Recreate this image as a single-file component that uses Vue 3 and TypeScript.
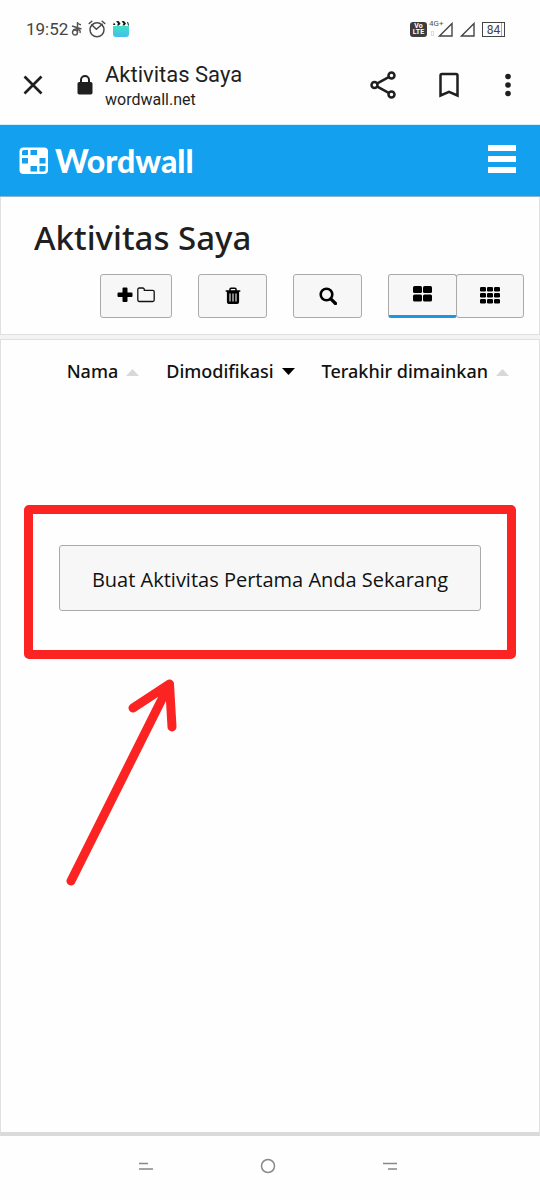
<script setup lang="ts">
import { ref } from 'vue'

type View = 'large' | 'small'
type Direction = 'up' | 'down'

interface Column {
  key: string
  label: string
  direction: Direction
}

const view = ref<View>('large')
const sortKey = ref('modified')

const columns: Column[] = [
  { key: 'name', label: 'Nama', direction: 'up' },
  { key: 'modified', label: 'Dimodifikasi', direction: 'down' },
  { key: 'played', label: 'Terakhir dimainkan', direction: 'up' },
]

const smallTiles = [0, 1, 2].flatMap((row) => [0, 1, 2].map((col) => ({ x: col * 7, y: row * 6 })))
</script>

<template>
  <div class="screen">
    <div class="status">
      <span class="clock">19:52</span>
      <svg class="note" width="12" height="16" viewBox="0 0 12 16" fill="none" stroke="#555" stroke-width="1.400">
        <circle cx="4" cy="11.500" r="2.500" />
        <path d="M6.500 11.500V1c.3 1.800 1.500 2.600 3.500 2.800M1 5l9.500 3M6.500 7.500 2 9M7 8.500c2 .5 2.600 1.800 2 3.500" />
      </svg>
      <svg class="alarm" width="18" height="18" viewBox="0 0 18 18" fill="none" stroke="#4a4a4a" stroke-width="1.500" stroke-linecap="round">
        <circle cx="9" cy="9.800" r="7" />
        <path d="M1.200 3.500 3.800 1.300M16.800 3.500 14.200 1.300M3.800 4.800 8.300 9.300 14.200 4.200" />
      </svg>
      <svg class="clapper" width="18" height="18" viewBox="0 0 18 18">
        <defs>
          <linearGradient id="clapper-fill" x1="0" y1="0" x2="0" y2="1">
            <stop offset="0" stop-color="#3fe0c5" />
            <stop offset="1" stop-color="#45bdf0" />
          </linearGradient>
        </defs>
        <path d="M1 6h16v8a3 3 0 0 1-3 3H4a3 3 0 0 1-3-3z" fill="url(#clapper-fill)" />
        <path d="M1 5 2 2.500l1.500 2.500zM4 1.200l2.500-.2 2 2.500L7 5.500H5l1-2zM9.500 1.200l2.500-.2 2 2.500-1.500 2h-2l1-2zM15 1.800l1.300.8.7 2.900h-1z" fill="#161616" />
      </svg>
      <span class="volte"><b>Vo</b><b>LTE</b></span>
      <span class="network"><span>4G+</span><i></i></span>
      <svg class="signal first" width="15" height="15" viewBox="0 0 15 15" fill="none" stroke="#444" stroke-width="1.400">
        <path d="M1.500 14H14V1.500z" />
      </svg>
      <svg class="signal second" width="15" height="15" viewBox="0 0 15 15" fill="none" stroke="#444" stroke-width="1.400">
        <path d="M1.500 14H14V1.500z" />
      </svg>
      <span class="battery">84</span>
    </div>

    <div class="browser">
      <button type="button" class="plain close" aria-label="Tutup">
        <svg width="20" height="20" viewBox="0 0 20 20" stroke="#1f1f1f" stroke-width="2.600"><path d="M1.500 1.500l17 17M18.500 1.500l-17 17" /></svg>
      </button>
      <svg class="lock" width="16" height="20" viewBox="0 0 16 20">
        <rect x="0.500" y="7" width="15" height="12.500" rx="1.800" fill="#1f1f1f" />
        <path d="M4 8V5a4 4 0 0 1 8 0v3" fill="none" stroke="#1f1f1f" stroke-width="2" />
      </svg>
      <div class="site">
        <span class="page-name">Aktivitas Saya</span>
        <span class="domain">wordwall.net</span>
      </div>
      <button type="button" class="plain" aria-label="Bagikan">
        <svg width="26" height="28" viewBox="0 0 26 28" fill="none" stroke="#1f1f1f" stroke-width="2.500">
          <circle cx="21.500" cy="4.500" r="3" /><circle cx="4.500" cy="14" r="3" /><circle cx="21.500" cy="23.500" r="3" />
          <path d="M7.300 12.400 18.700 6.100M7.300 15.600l11.400 6.300" />
        </svg>
      </button>
      <button type="button" class="plain bookmark" aria-label="Simpan">
        <svg width="20" height="26" viewBox="0 0 20 26" fill="none" stroke="#1f1f1f" stroke-width="2.500">
          <path d="M1.500 23.500V3.500a1.500 1.500 0 0 1 1.500-1.500h14a1.500 1.500 0 0 1 1.500 1.500v20L10 19.800z" />
        </svg>
      </button>
      <button type="button" class="plain more" aria-label="Lainnya">
        <svg width="6" height="24" viewBox="0 0 6 24" fill="#1f1f1f"><circle cx="3" cy="3.500" r="2.800" /><circle cx="3" cy="12" r="2.800" /><circle cx="3" cy="20.500" r="2.800" /></svg>
      </button>
    </div>

    <header class="brand-bar">
      <a href="#" class="brand">
        <svg width="30" height="28" viewBox="0 0 30 28">
          <rect x="0.500" y="0.500" width="28.500" height="26.500" rx="4" fill="#fff" />
          <g fill="#12a0ef">
            <path d="M5 3h4v5H3V5a2 2 0 0 1 2-2z" />
            <rect x="11.500" y="3" width="6.500" height="5" />
            <rect x="3" y="11" width="6" height="5.500" />
            <rect x="20.500" y="11" width="6" height="5.500" />
            <rect x="11.500" y="19" width="6.500" height="5.500" />
            <path d="M20.500 19h6v3.500a2 2 0 0 1-2 2h-4z" />
          </g>
        </svg>
        <span class="wordmark">Wordwall</span>
      </a>
      <button type="button" class="plain menu" aria-label="Menu"><i></i><i></i><i></i></button>
    </header>

    <section class="panel heading">
      <h1>Aktivitas Saya</h1>
      <div class="toolbar">
        <button type="button" class="tool wide" aria-label="Folder baru">
          <svg width="16" height="16" viewBox="0 0 16 16" fill="#000"><path d="M7 .5h2.500a1 1 0 0 1 1 1v4h4a1 1 0 0 1 1 1v2.500a1 1 0 0 1-1 1h-4v4a1 1 0 0 1-1 1H6.500a1 1 0 0 1-1-1v-4h-4a1 1 0 0 1-1-1V6.500a1 1 0 0 1 1-1h4v-4a1 1 0 0 1 1-1z" /></svg>
          <svg width="18" height="16" viewBox="0 0 18 16" fill="none" stroke="#111" stroke-width="1.300"><path d="M.8 13V2.500A1.500 1.500 0 0 1 2.300 1h3.500a1.500 1.500 0 0 1 1.500 1.500v.8h8.400a1.500 1.500 0 0 1 1.500 1.500V13a1.500 1.500 0 0 1-1.500 1.500H2.300A1.500 1.500 0 0 1 .8 13z" /></svg>
        </button>
        <button type="button" class="tool" aria-label="Sampah">
          <svg width="16" height="18" viewBox="0 0 16 18">
            <path d="M5 4V2.200A1 1 0 0 1 6 1.200h4a1 1 0 0 1 1 1V4" fill="none" stroke="#000" stroke-width="1.500" />
            <path d="M.7 3.300h14.600v1.400h-1.200V15a2 2 0 0 1-2 2H3.900a2 2 0 0 1-2-2V4.700H.7z" fill="#000" />
            <path d="M5 6.500v8M8 6.500v8M11 6.500v8" stroke="#ddd" stroke-width="1.200" />
          </svg>
        </button>
        <button type="button" class="tool" aria-label="Cari">
          <svg width="18" height="18" viewBox="0 0 18 18" fill="none" stroke="#000"><circle cx="7.500" cy="7.500" r="5.800" stroke-width="2.600" /><path d="M11.800 11.800l4.700 4.700" stroke-width="3.200" stroke-linecap="round" /></svg>
        </button>
        <div class="views">
          <button type="button" class="tool" :class="{ active: view === 'large' }" aria-label="Kisi besar" @click="view = 'large'">
            <svg width="19" height="16" viewBox="0 0 19 16"><rect width="9" height="7" rx="1.500" /><rect x="10" width="9" height="7" rx="1.500" /><rect y="8.500" width="9" height="7" rx="1.500" /><rect x="10" y="8.500" width="9" height="7" rx="1.500" /></svg>
          </button>
          <button type="button" class="tool" :class="{ active: view === 'small' }" aria-label="Kisi kecil" @click="view = 'small'">
            <svg width="20" height="17" viewBox="0 0 20 17"><rect v-for="(tile, i) in smallTiles" :key="i" :x="tile.x" :y="tile.y" width="6" height="4.500" rx="1.200" /></svg>
          </button>
        </div>
      </div>
    </section>

    <main class="panel content">
      <div class="sorting">
        <button v-for="column in columns" :key="column.key" type="button" class="plain sort" :class="{ chosen: sortKey === column.key }" @click="sortKey = column.key">
          {{ column.label }}
          <svg width="13" height="7" viewBox="0 0 13 7"><path :d="column.direction === 'up' ? 'M0 7h13L6.500 0z' : 'M0 0h13L6.500 7z'" /></svg>
        </button>
      </div>
      <div class="highlight">
        <button type="button" class="create">Buat Aktivitas Pertama Anda Sekarang</button>
      </div>
      <svg class="arrow" width="120" height="212" viewBox="0 0 120 212" fill="none" stroke="#fc2323" stroke-width="9" stroke-linecap="round" stroke-linejoin="round">
        <path d="M9 205 107.500 8M71 32l36.500-24 2.500 43" />
      </svg>
    </main>

    <nav class="system">
      <button type="button" class="plain" aria-label="Aplikasi terbaru"><svg width="16" height="16" viewBox="0 0 16 16" stroke="#888" stroke-width="1.500"><path d="M1 5.500h9M1 11h14" /></svg></button>
      <button type="button" class="plain" aria-label="Beranda"><svg width="16" height="16" viewBox="0 0 16 16" fill="none" stroke="#888" stroke-width="1.500"><circle cx="8" cy="8" r="6.500" /></svg></button>
      <button type="button" class="plain" aria-label="Kembali"><svg width="16" height="16" viewBox="0 0 16 16" stroke="#888" stroke-width="1.500"><path d="M1 5.500h14M6 11h9" /></svg></button>
    </nav>
  </div>
</template>

<style>
body {
  margin: 0;
  background: #fefefe;
}
</style>

<style scoped>
* {
  box-sizing: border-box;
}
.screen {
  display: flex;
  flex-direction: column;
  min-height: 100vh;
  background: #fefefe;
  color: #1f1f1f;
  font-family: Roboto, sans-serif;
}
svg {
  display: block;
  flex: none;
}
button {
  font: inherit;
  color: inherit;
  cursor: pointer;
}
.plain {
  padding: 0;
  border: 0;
  background: none;
}
.status {
  display: flex;
  align-items: center;
  height: 48px;
  padding: 10px 35px 0 26px;
}
.clock {
  font-size: 17px;
  line-height: 20px;
  color: #444;
}
.note {
  margin-left: 3px;
}
.alarm {
  margin-left: 5px;
}
.clapper {
  margin-left: 6px;
}
.volte {
  display: flex;
  flex-direction: column;
  justify-content: center;
  width: 17px;
  height: 15px;
  margin-left: auto;
  border-radius: 3px;
  background: #3c3c3c;
  color: #fff;
  font-size: 7px;
  line-height: 6px;
  text-align: center;
}
.network {
  align-self: flex-start;
  margin: 9px 0 0 2px;
  width: 14px;
  color: #555;
  font-size: 8px;
  line-height: 10px;
  white-space: nowrap;
}
.network i {
  display: block;
  width: 3px;
  height: 5px;
  margin: 2px;
  border: 1px solid #ddd;
}
.signal.first {
  margin-left: -5px;
}
.signal.second {
  margin-left: 7px;
}
.battery {
  width: 23px;
  height: 15px;
  margin-left: 7px;
  border: 1px solid #444;
  box-shadow: inset -2px 0 #fefefe, inset -3px 0 #aaa;
  color: #444;
  font-size: 12px;
  line-height: 14px;
  text-align: center;
}
.browser {
  display: flex;
  align-items: center;
  height: 77px;
  padding: 0 29px 3px 23px;
  border-bottom: 1px solid #d5effb;
}
.lock {
  margin-left: 34px;
}
.site {
  display: flex;
  flex: 1;
  flex-direction: column;
  margin: 5px 0 0 12px;
}
.page-name {
  font-size: 22px;
  line-height: 26px;
}
.domain {
  font-size: 16px;
  line-height: 24px;
}
.bookmark {
  margin-left: 43px;
}
.more {
  margin-left: 46px;
}
.brand-bar {
  display: flex;
  align-items: center;
  justify-content: space-between;
  height: 72px;
  padding: 0 24px 0 19px;
  border-bottom: 1px solid #8fb4cb;
  background: #12a0ef;
}
.brand {
  display: flex;
  align-items: center;
  gap: 6px;
  color: #fff;
  text-decoration: none;
}
.wordmark {
  font-family: Lato, sans-serif;
  font-size: 32px;
  font-weight: 900;
  line-height: 36px;
}
.menu {
  display: flex;
  flex-direction: column;
  gap: 5px;
  width: 28px;
  padding-bottom: 3px;
}
.menu i {
  height: 6px;
  background: #fff;
}
.panel {
  border: 1px solid #e0e0e0;
  border-top: 0;
  background: #fefefe;
  font-family: "Open Sans", sans-serif;
}
.heading {
  padding: 20px 15px 16px 33px;
}
h1 {
  margin: 0;
  font-family: "Noto Sans", "Open Sans", sans-serif;
  font-size: 33px;
  font-weight: 500;
  line-height: 42px;
}
.toolbar {
  display: flex;
  justify-content: flex-end;
  gap: 26px;
  margin-top: 15px;
}
.tool {
  display: flex;
  align-items: center;
  justify-content: center;
  gap: 4px;
  width: 69px;
  height: 44px;
  padding: 0;
  border: 1px solid #aaa;
  border-radius: 3px;
  background: #f7f7f7;
}
.tool.wide {
  width: 72px;
  padding-bottom: 2px;
}
.views {
  display: flex;
}
.views .tool {
  padding-bottom: 2px;
}
.views .tool + .tool {
  width: 68px;
  margin-left: -1px;
}
.views .tool.active {
  border-bottom: 3px solid #1b98e0;
}
.content {
  flex: 1;
  margin-top: 4px;
  border-top: 1px solid #e0e0e0;
  border-bottom: 4px solid #dadada;
  box-shadow: 0 -4px #f3f3f3;
}
.sorting {
  display: flex;
  justify-content: flex-end;
  gap: 27px;
  padding: 18px 30px 0;
}
.sort {
  display: flex;
  align-items: center;
  gap: 8px;
  color: #111;
  font-family: "Noto Sans", "Open Sans", sans-serif;
  font-size: 18px;
  font-weight: 500;
  line-height: 26px;
  white-space: nowrap;
}
.sort svg {
  margin-top: 3px;
  fill: #d8d8d8;
}
.sort.chosen svg {
  margin-top: 0;
  fill: #000;
}
.highlight {
  margin: 121px 23px 0;
  padding: 31px 26px 39px;
  border: 9px solid #fc2323;
  border-radius: 5px;
}
.create {
  display: block;
  width: 100%;
  height: 66px;
  padding: 2px 0 0;
  border: 1px solid #aaa;
  border-radius: 3px;
  background: #f7f7f7;
  color: #111;
  font-size: 20px;
}
.arrow {
  margin: 17px 0 0 61px;
}
.system {
  display: flex;
  align-items: center;
  justify-content: center;
  gap: 106px;
  height: 64px;
  padding: 0 4px 4px 0;
}
</style>
